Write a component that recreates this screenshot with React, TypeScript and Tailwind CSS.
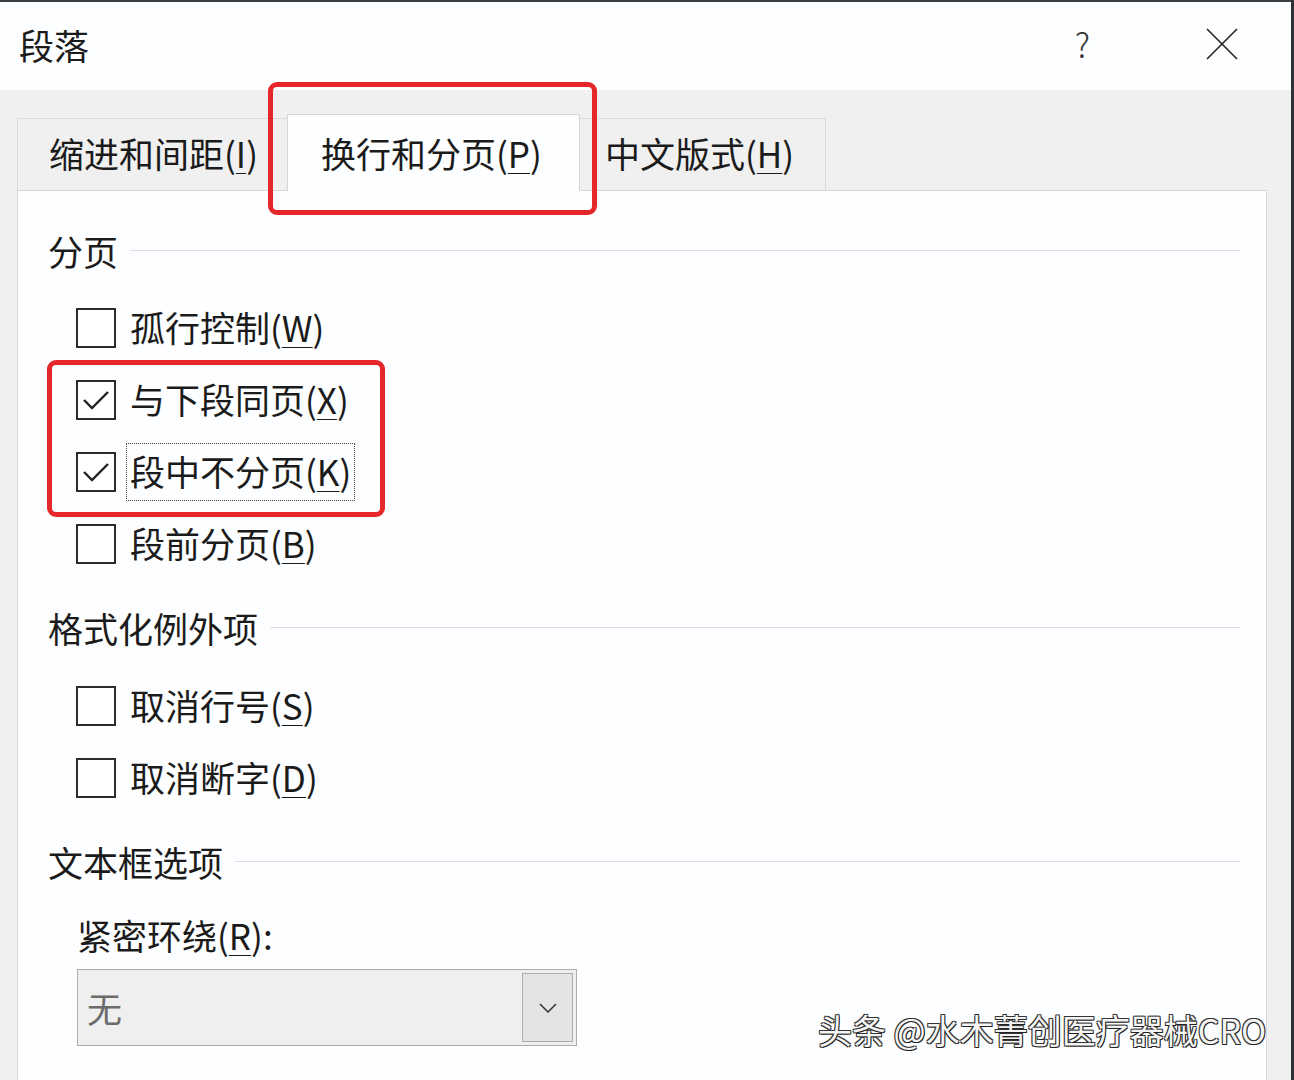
import React from "react";

const font = { fontFamily: '"Noto Sans CJK SC", "Noto Sans", sans-serif' };

function Label({ text, k, tail = ")" }: { text: string; k: string; tail?: string }) {
    return (
        <span className="text-[35px] leading-none text-[#1b1b1b]">
            {text}(<span className="underline decoration-1 underline-offset-[5px]">{k}</span>{tail}
        </span>
    );
}

function Check({ checked }: { checked: boolean }) {
    return (
        <div className="w-[40px] h-[40px] border-[2px] border-[#2d2d2d] bg-white flex items-center justify-center shrink-0">
            {checked && (
                <svg width="28" height="22" viewBox="0 0 28 22" fill="none">
                    <polyline points="2,11 10,19 26,3" stroke="#222" strokeWidth="2.4" />
                </svg>
            )}
        </div>
    );
}

function Row({ checked, text, k, focus }: { checked: boolean; text: string; k: string; focus?: boolean }) {
    return (
        <div className="h-[72px] flex items-center pl-[28px] gap-[10px]">
            <Check checked={checked} />
            <div className={focus ? "border border-dotted border-[#444] px-[3px] py-[9px]" : "px-[4px] py-[10px]"}>
                <Label text={text} k={k} />
            </div>
        </div>
    );
}

function Heading({ text }: { text: string }) {
    return (
        <div className="h-[48px] flex items-center gap-[12px] pr-[26px]">
            <span className="text-[35px] leading-none text-[#1b1b1b]">{text}</span>
            <div className="flex-1 h-px bg-[#dcdde0]" />
        </div>
    );
}

export default function App() {
    return (
        <div className="w-[1294px] h-[1080px] overflow-hidden relative flex bg-[#f0f0f0]" style={font}>
            <div className="w-[1291px] h-[1080px] flex flex-col">
                <div className="h-[2px] shrink-0 bg-[#3a3e44]" />
                <div className="h-[88px] shrink-0 bg-[#fdfeff] flex items-center pl-[19px] pb-[4px]">
                    <span className="text-[35px] leading-none text-[#1b1b1b]">段落</span>
                    <div className="flex-1" />
                    <span className="text-[34px] leading-none text-[#333] font-light mr-[116px]">?</span>
                    <svg width="32" height="32" viewBox="0 0 32 32" className="mr-[53px]">
                        <line x1="1" y1="1" x2="31" y2="31" stroke="#222" strokeWidth="1.6" />
                        <line x1="31" y1="1" x2="1" y2="31" stroke="#222" strokeWidth="1.6" />
                    </svg>
                </div>
                <div className="flex-1 min-h-0 flex flex-col bg-[#f0f0f0] pl-[17px] pt-[24px]">
                    <div className="flex items-end h-[76px] shrink-0">
                        <div className="w-[270px] h-[72px] border-t border-l border-[#dadada] bg-[#f0f0f0] pl-[31px] pt-[16px]">
                            <Label text="缩进和间距" k="I" />
                        </div>
                        <div className="relative w-[293px] h-[77px] -mb-px z-10 border-t border-l border-r border-[#d6d6d6] bg-[#fdfeff] pl-[33px] pt-[20px]">
                            <Label text="换行和分页" k="P" />
                            <div className="absolute left-[-20px] right-[-18px] top-[-33px] bottom-[-24px] border-[5px] border-[#e5262a] rounded-[9px]" />
                        </div>
                        <div className="w-[246px] h-[72px] border-t border-r border-[#dadada] bg-[#f0f0f0] pl-[25px] pt-[16px]">
                            <Label text="中文版式" k="H" />
                        </div>
                    </div>
                    <div className="w-[1250px] flex-1 min-h-0 overflow-hidden border border-b-0 border-[#d9d9d9] bg-[#fdfeff] pl-[30px] pt-[35px]">
                        <Heading text="分页" />
                        <div className="mt-[18px]">
                            <Row checked={false} text="孤行控制" k="W" />
                            <div className="relative">
                                <Row checked={true} text="与下段同页" k="X" />
                                <Row checked={true} text="段中不分页" k="K" focus />
                                <div className="absolute left-[-1px] top-[-4px] w-[338px] h-[157px] border-[5px] border-[#e5262a] rounded-[9px]" />
                            </div>
                            <Row checked={false} text="段前分页" k="B" />
                        </div>
                        <div className="mt-[23px]">
                            <Heading text="格式化例外项" />
                        </div>
                        <div className="mt-[19px]">
                            <Row checked={false} text="取消行号" k="S" />
                            <Row checked={false} text="取消断字" k="D" />
                        </div>
                        <div className="mt-[23px]">
                            <Heading text="文本框选项" />
                        </div>
                        <div className="mt-[25px] h-[48px] flex items-center pl-[29px]">
                            <Label text="紧密环绕" k="R" tail="):" />
                        </div>
                        <div className="mt-[11px] ml-[29px] w-[500px] h-[77px] border border-[#adadad] bg-[#efefef] flex items-center pl-[9px] pr-[3px]">
                            <span className="text-[35px] leading-none text-[#6b6b6b]">无</span>
                            <div className="flex-1" />
                            <div className="w-[51px] h-[69px] border border-[#adadad] bg-[#e4e4e4] flex items-center justify-center">
                                <svg width="18" height="10" viewBox="0 0 18 10" fill="none">
                                    <polyline points="1,1 9,9 17,1" stroke="#333" strokeWidth="1.5" />
                                </svg>
                            </div>
                        </div>
                    </div>
                </div>
            </div>
            <div className="w-[3px] bg-[#2e3138]" />
            <div
                className="absolute left-[818px] top-[1013px] text-[34px] leading-none text-[#f4f4f4]"
                style={{ textShadow: "1px 1px 0 #222, -1px -1px 0 #333, 1px -1px 0 #333, -1px 1px 0 #333" }}
            >
                头条 @水木菁创医疗器械CRO
            </div>
        </div>
    );
}
